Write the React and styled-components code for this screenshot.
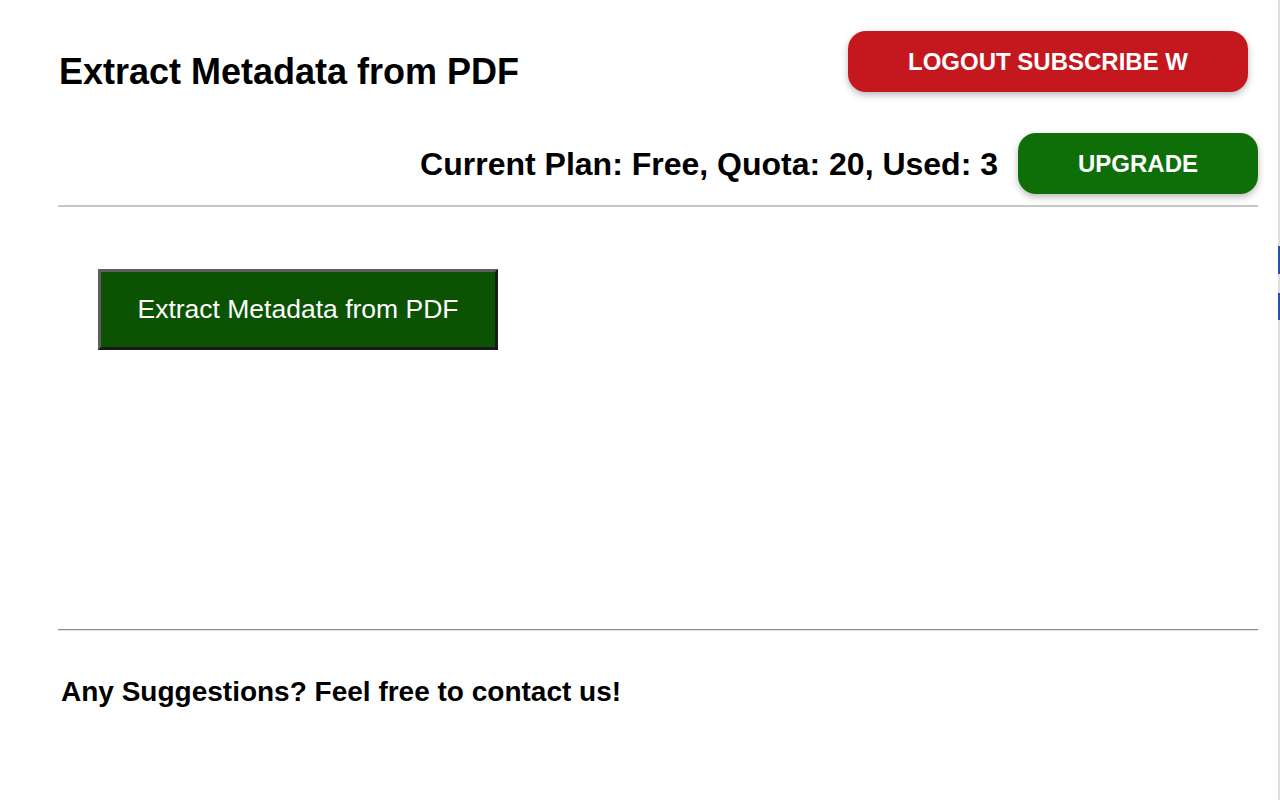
import React from "react";
import styled, { createGlobalStyle } from "styled-components";

const GlobalStyle = createGlobalStyle`
  html, body {
    margin: 0;
    padding: 0;
    background: #ffffff;
    font-family: "Liberation Sans", Arial, Helvetica, sans-serif;
    color: #000;
  }
`;

const Page = styled.div`
  padding-left: 58px;
  min-height: 800px;
  box-sizing: border-box;
`;

const Container = styled.div`
  width: 1200px;
`;

const HeaderRow = styled.header`
  display: flex;
  justify-content: space-between;
  align-items: flex-start;
  padding-top: 31px;
`;

const Title = styled.h1`
  margin: 21px 0 0 1px;
  font-size: 36px;
  line-height: 40px;
  font-weight: 700;
`;

const PillButton = styled.button`
  box-sizing: border-box;
  width: ${(p) => p.$width}px;
  height: 61px;
  border: none;
  border-radius: 18px;
  background: ${(p) => p.$bg};
  color: #ffffff;
  font-family: "Liberation Sans", Arial, sans-serif;
  font-size: 24px;
  font-weight: 700;
  letter-spacing: 0;
  box-shadow: 0 3px 7px rgba(0, 0, 0, 0.28);
  margin-right: ${(p) => p.$mr || 0}px;
  white-space: nowrap;
  overflow: hidden;
  cursor: pointer;
  padding: 0;
`;

const PlanRow = styled.div`
  display: flex;
  justify-content: flex-end;
  align-items: center;
  gap: 20px;
  margin-top: 41px;
`;

const PlanText = styled.span`
  font-size: 32px;
  font-weight: 700;
  line-height: 36px;
`;

const Divider = styled.hr`
  margin: 11px 0 0 0;
  border: none;
  height: 2px;
  background: #c6c6c6;
`;

const Content = styled.section`
  padding: 62px 0 0 40px;
  height: 360px;
`;

const ExtractButton = styled.button`
  box-sizing: border-box;
  width: 400px;
  height: 81px;
  border: 3px solid;
  border-color: #5e5e5e #1a1a1a #1a1a1a #5e5e5e;
  background: #0b5203;
  color: #ffffff;
  font-family: "Liberation Sans", Arial, sans-serif;
  font-size: 26.5px;
  font-weight: 400;
  padding: 0;
  cursor: pointer;
`;

const FooterRule = styled.hr`
  margin: 0;
  height: 0;
  border: none;
  border-top: 1px solid #8a8a8a;
  border-bottom: 1px solid #e2e2e2;
`;

const FooterText = styled.p`
  margin: 45px 0 0 3px;
  font-size: 28px;
  line-height: 31px;
  font-weight: 700;
`;

const EdgeStrip = styled.div`
  position: fixed;
  top: 0;
  right: 0;
  width: 2px;
  height: 100vh;
  background: #dedede;
`;

const EdgeMark = styled.div`
  position: absolute;
  left: 0;
  width: 2px;
  top: ${(p) => p.$top}px;
  height: ${(p) => p.$h}px;
  background: #2b4fae;
`;

export default function App() {
  return (
    <>
      <GlobalStyle />
      <Page>
        <Container>
          <HeaderRow>
            <Title>Extract Metadata from PDF</Title>
            <PillButton $width={400} $bg="#c5171e" $mr={10}>
              LOGOUT SUBSCRIBE W
            </PillButton>
          </HeaderRow>
          <PlanRow>
            <PlanText>Current Plan: Free, Quota: 20, Used: 3</PlanText>
            <PillButton $width={240} $bg="#0e6f09">
              UPGRADE
            </PillButton>
          </PlanRow>
          <Divider />
          <Content>
            <ExtractButton>Extract Metadata from PDF</ExtractButton>
          </Content>
          <FooterRule />
          <FooterText>Any Suggestions? Feel free to contact us!</FooterText>
        </Container>
      </Page>
      <EdgeStrip>
        <EdgeMark $top={246} $h={28} />
        <EdgeMark $top={293} $h={27} />
      </EdgeStrip>
    </>
  );
}
